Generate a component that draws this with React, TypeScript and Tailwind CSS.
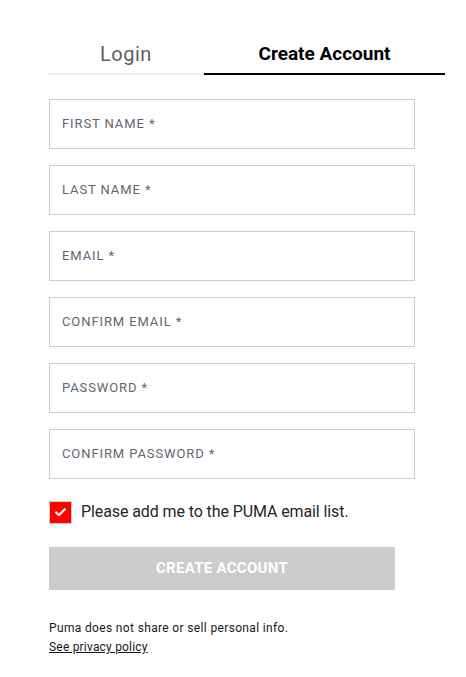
import { Check } from 'lucide-react';

const fields = ['First Name', 'Last Name', 'Email', 'Confirm Email', 'Password', 'Confirm Password'];

export default function App() {
  return (
    <div className="min-h-[677px] bg-white font-['Roboto',sans-serif] text-[#181818]">
      <div className="ml-12 w-[397px] pt-[41px]">
        <div className="flex">
          <button type="button" className="w-[156px] border-b-2 border-[#efefef] pb-[6px] text-[20px] leading-[26px] tracking-[0.5px] text-[#5a5f66]">
            Login
          </button>
          <button type="button" className="flex-1 border-b-2 border-black pb-[6px] text-[19px] font-bold leading-[26px] text-black">
            Create Account
          </button>
        </div>
      </div>

      <form className="ml-[49px] mt-[24px] w-[366px]">
        <div className="flex flex-col gap-4">
          {fields.map((f) => (
            <label key={f} className="flex h-[50px] items-center border border-[#cccccc] px-3">
              <span className="text-[13px] uppercase tracking-[0.9px] text-[#5f6670]">{f} *</span>
            </label>
          ))}
        </div>

        <div className="mt-[21px] flex items-center gap-[9px]">
          <span className="flex h-[23px] w-[23px] items-center justify-center border border-[#cfcfcf] bg-[#ff0000]">
            <Check className="h-[13px] w-[13px] text-white" strokeWidth={4} />
          </span>
          <span className="text-[16px] tracking-[-0.1px] text-[#24262a]">Please add me to the PUMA email list.</span>
        </div>

        <button
          type="button"
          className="mt-[23px] h-[43px] w-[346px] bg-[#cccccc] text-[15px] font-bold uppercase tracking-[0.3px] text-white"
        >
          Create Account
        </button>

        <div className="mt-[29px] text-[12px] leading-[19px] text-[#181818]">
          <p className="tracking-[0.35px]">Puma does not share or sell personal info.</p>
          <a href="#" className="block w-fit tracking-[0.2px] underline">
            See privacy policy
          </a>
        </div>
      </form>
    </div>
  );
}
